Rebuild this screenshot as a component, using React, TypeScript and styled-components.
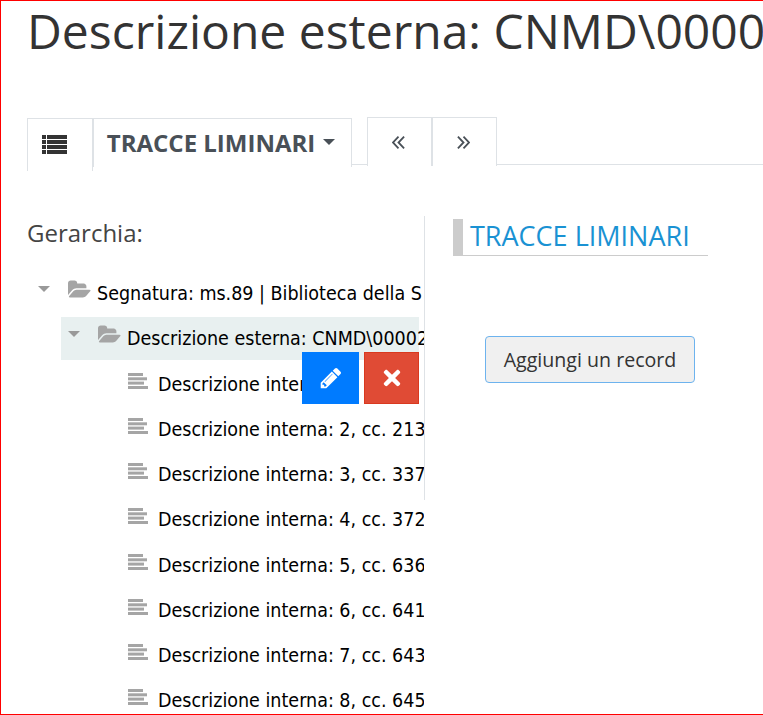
import React from "react";
import styled, { createGlobalStyle } from "styled-components";
import { FaTimes } from "react-icons/fa";

const internalItems = [
  "Descrizione interna: 1",
  "Descrizione interna: 2, cc. 213",
  "Descrizione interna: 3, cc. 337",
  "Descrizione interna: 4, cc. 372",
  "Descrizione interna: 5, cc. 636",
  "Descrizione interna: 6, cc. 641",
  "Descrizione interna: 7, cc. 643",
  "Descrizione interna: 8, cc. 645",
];

const ListIcon = () => (
  <ListSvg viewBox="0 0 25 19">
    <rect x="0" y="0" width="4" height="4" />
    <rect x="5" y="0" width="20" height="4" />
    <rect x="0" y="5" width="4" height="4" />
    <rect x="5" y="5" width="20" height="4" />
    <rect x="0" y="10" width="4" height="4" />
    <rect x="5" y="10" width="20" height="4" />
    <rect x="0" y="15" width="4" height="4" />
    <rect x="5" y="15" width="20" height="4" />
  </ListSvg>
);

const ChevronsLeft = () => (
  <ChevronSvg viewBox="0 0 13 13">
    <path d="M6.5 0.7 L0.9 6.5 L6.5 12.3 M12.1 0.7 L6.5 6.5 L12.1 12.3" />
  </ChevronSvg>
);

const ChevronsRight = () => (
  <ChevronSvg viewBox="0 0 13 13">
    <path d="M0.9 0.7 L6.5 6.5 L0.9 12.3 M6.5 0.7 L12.1 6.5 L6.5 12.3" />
  </ChevronSvg>
);

const FolderIcon = () => (
  <FolderSvg viewBox="0 0 1920 1792">
    <path d="M1879 952q0 31-31 66l-336 396q-43 51-120.5 86.5t-143.5 35.5h-1088q-34 0-60.5-13t-26.5-43q0-31 31-66l336-396q43-51 120.5-86.5t143.5-35.5h1088q34 0 60.5 13t26.5 43zm-343-344v160h-832q-94 0-197 47.5t-164 119.5l-337 396-5 6q0-4-.5-12.5t-.5-12.5v-960q0-92 66-158t158-66h320q92 0 158 66t66 158v32h544q92 0 158 66t66 158z" />
  </FolderSvg>
);

const LinesIcon = () => (
  <LinesSvg viewBox="0 0 20 16">
    <rect x="0" y="0" width="15" height="3" />
    <rect x="0" y="4.3" width="19" height="3" />
    <rect x="0" y="8.6" width="16" height="3" />
    <rect x="0" y="13" width="20" height="3" />
  </LinesSvg>
);

const PencilIcon = () => (
  <PencilSvg viewBox="0 0 1792 1792">
    <path d="M491 1536l91-91-235-235-91 91v107h128v128h107zm523-928q0-22-22-22-10 0-17 7l-542 542q-7 7-7 17 0 22 22 22 10 0 17-7l542-542q7-7 7-17zm-54-192l416 416-832 832h-416v-416zm683 96q0 53-37 90l-166 166-416-416 166-165q36-38 90-38 53 0 91 38l235 234q37 39 37 91z" />
  </PencilSvg>
);

export default function App() {
  return (
    <Page>
      <GlobalStyle />
      <Title>Descrizione esterna: CNMD\00002</Title>
      <TabBar>
        <IconTab>
          <ListIcon />
        </IconTab>
        <DropdownTab>
          TRACCE LIMINARI
          <DropdownCaret />
        </DropdownTab>
        <PagerTab $first>
          <ChevronsLeft />
        </PagerTab>
        <PagerTab>
          <ChevronsRight />
        </PagerTab>
      </TabBar>
      <Columns>
        <TreeColumn>
          <TreeHeading>Gerarchia:</TreeHeading>
          <TreeRow $level={0}>
            <TreeCaret />
            <FolderIcon />
            <RowLabel>Segnatura: ms.89 | Biblioteca della S</RowLabel>
          </TreeRow>
          <TreeRow $level={1} $selected>
            <TreeCaret />
            <FolderIcon />
            <RowLabel>Descrizione esterna: CNMD\00002</RowLabel>
            <RowActions>
              <EditButton>
                <PencilIcon />
              </EditButton>
              <DeleteButton>
                <FaTimes />
              </DeleteButton>
            </RowActions>
          </TreeRow>
          {internalItems.map((item) => (
            <TreeRow key={item} $level={2}>
              <LinesIcon />
              <RowLabel>{item}</RowLabel>
            </TreeRow>
          ))}
        </TreeColumn>
        <RecordPanel>
          <PanelHeading>TRACCE LIMINARI</PanelHeading>
          <AddButton>Aggiungi un record</AddButton>
        </RecordPanel>
      </Columns>
    </Page>
  );
}

const GlobalStyle = createGlobalStyle`
  html, body {
    margin: 0;
    padding: 0;
    height: 100%;
    background: #fff;
  }
  #root {
    height: 100%;
  }
`;

const Page = styled.div`
  box-sizing: border-box;
  height: 715px;
  overflow: hidden;
  border: 1px solid #ff0000;
  border-right: 0;
  padding-left: 26px;
  font-family: "Open Sans", sans-serif;
  color: #333;
`;

const Title = styled.h1`
  margin: 0;
  height: 116px;
  font-size: 48px;
  line-height: 60px;
  font-weight: 400;
  white-space: nowrap;
  color: #333;
`;

const TabBar = styled.div`
  display: flex;
  align-items: flex-start;
  height: 47px;
  border-bottom: 1px solid #dee2e6;
`;

const BaseTab = styled.div`
  box-sizing: border-box;
  display: flex;
  align-items: center;
  justify-content: center;
  background: #fff;
  border: 1px solid #dee2e6;
  border-bottom: 0;
`;

const IconTab = styled(BaseTab)`
  width: 66px;
  height: 53px;
  margin-top: 1px;
  padding-right: 11px;
  padding-bottom: 2px;
`;

const ListSvg = styled.svg`
  width: 25px;
  height: 19px;
  fill: #333;
`;

const DropdownTab = styled(BaseTab)`
  width: 259px;
  height: 49px;
  margin-top: 1px;
  padding-right: 3px;
  padding-bottom: 2px;
  font-size: 24px;
  font-weight: 700;
  color: #495057;
  white-space: nowrap;
`;

const DropdownCaret = styled.span`
  margin-left: 8px;
  border-top: 6px solid #495057;
  border-left: 6px solid transparent;
  border-right: 6px solid transparent;
`;

const PagerTab = styled(BaseTab)<{ $first?: boolean }>`
  width: 65px;
  height: 49px;
  margin-left: ${(p) => (p.$first ? "15px" : "0")};
  padding-right: 2px;
`;

const ChevronSvg = styled.svg`
  width: 13px;
  height: 13px;
  fill: none;
  stroke: #495057;
  stroke-width: 1.8;
`;

const Columns = styled.div`
  display: flex;
  align-items: flex-start;
  padding-top: 51px;
`;

const TreeColumn = styled.div`
  flex: none;
  width: 397px;
  height: 500px;
  overflow: hidden;
`;

const TreeHeading = styled.div`
  height: 56px;
  font-size: 24px;
  line-height: 34px;
  color: #444;
`;

const TreeRow = styled.div<{ $level: number; $selected?: boolean }>`
  position: relative;
  z-index: ${(p) => (p.$selected ? 1 : 0)};
  display: flex;
  align-items: flex-start;
  height: 43px;
  margin-bottom: 2.25px;
  margin-left: ${(p) => (p.$level === 0 ? "4px" : "34px")};
  width: ${(p) => (p.$level === 0 ? "388px" : "358px")};
  padding-left: ${(p) => (p.$level === 2 ? "67px" : "7px")};
  box-sizing: border-box;
  background: ${(p) => (p.$selected ? "#e8f0f0" : "transparent")};
  line-height: 44px;
`;

const TreeCaret = styled.span`
  flex: none;
  width: 0;
  height: 0;
  margin-top: 14px;
  margin-right: 18px;
  border-top: 6px solid #999;
  border-left: 6px solid transparent;
  border-right: 6px solid transparent;
`;

const FolderSvg = styled.svg`
  flex: none;
  width: 23px;
  height: 21.5px;
  margin-top: 7px;
  margin-right: 6px;
  fill: #a5a5a5;
`;

const LinesSvg = styled.svg`
  flex: none;
  width: 20px;
  height: 16px;
  margin-top: 10px;
  margin-right: 10px;
  fill: #a5a5a5;
`;

const RowLabel = styled.span`
  font-family: "DejaVu Sans Condensed", "DejaVu Sans", sans-serif;
  font-stretch: condensed;
  font-size: 19.5px;
  color: #000;
  white-space: nowrap;
`;

const RowActions = styled.div`
  position: absolute;
  top: 35px;
  right: 0;
  display: flex;
  gap: 5px;
`;

const ActionButton = styled.button`
  box-sizing: border-box;
  height: 52px;
  padding: 0;
  display: flex;
  align-items: center;
  justify-content: center;
  color: #fff;
`;

const EditButton = styled(ActionButton)`
  width: 57px;
  border: 0;
  background: #007bff;
`;

const PencilSvg = styled.svg`
  width: 24px;
  height: 24px;
  fill: #fff;
`;

const DeleteButton = styled(ActionButton)`
  width: 55px;
  border: 1px solid #d9391f;
  background: #e04b35;
  font-size: 24px;
`;

const RecordPanel = styled.div`
  flex: none;
  box-sizing: border-box;
  width: 300px;
  height: 284px;
  border-left: 1px solid #dee2e6;
  padding: 3px 0 0 28px;
`;

const PanelHeading = styled.h2`
  box-sizing: border-box;
  width: 255px;
  height: 37px;
  margin: 0;
  padding-left: 7px;
  border-left: 10px solid #ccc;
  border-bottom: 1px solid #ccc;
  font-size: 27px;
  line-height: 33px;
  font-weight: 400;
  color: #1a92d3;
  white-space: nowrap;
`;

const AddButton = styled.button`
  display: block;
  box-sizing: border-box;
  width: 210px;
  height: 47px;
  margin: 80px 0 0 32px;
  padding: 0;
  border: 1px solid #6db3ee;
  border-radius: 4px;
  background: #f0f0f0;
  font-family: "Open Sans", sans-serif;
  font-size: 19.6px;
  color: #333;
`;
